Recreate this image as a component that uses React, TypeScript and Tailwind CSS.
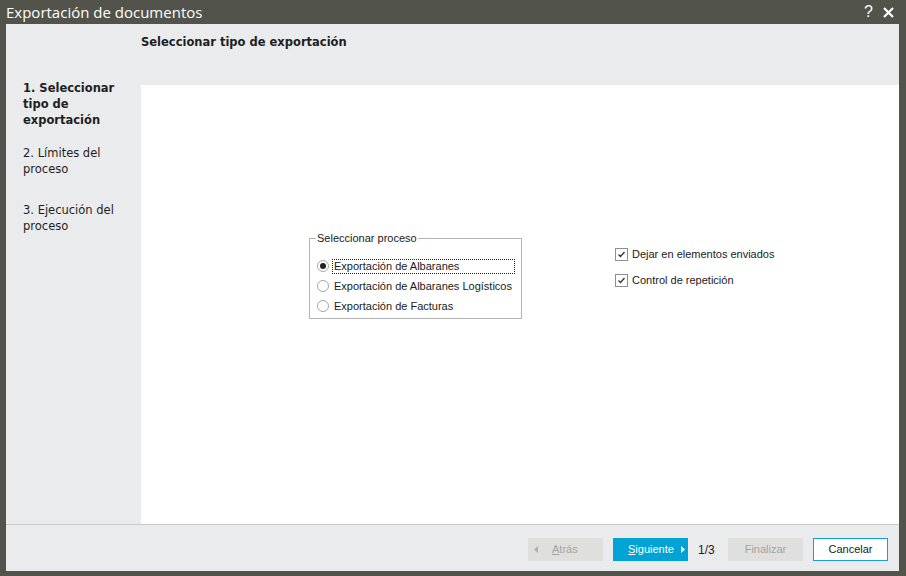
import { useState } from "react";

const steps = [
  { label: "1. Seleccionar tipo de exportación", active: true, gap: "mb-[17px]" },
  { label: "2. Límites del proceso", active: false, gap: "mb-[25px]" },
  { label: "3. Ejecución del proceso", active: false, gap: "" },
];

const procesos = [
  "Exportación de Albaranes",
  "Exportación de Albaranes Logísticos",
  "Exportación de Facturas",
];

const Radio = ({ checked }: { checked: boolean }) => (
  <span className="w-[12px] h-[12px] rounded-full border border-[#a8a8a8] bg-white flex items-center justify-center shrink-0">
    {checked && <span className="w-[6px] h-[6px] rounded-full bg-[#222]" />}
  </span>
);

const Check = () => (
  <span className="w-[13px] h-[13px] border border-[#8f8f8f] bg-white flex items-center justify-center shrink-0">
    <svg width="9" height="9" viewBox="0 0 9 9">
      <path d="M1.5 4.5 L3.5 6.5 L7.5 2" fill="none" stroke="#333" strokeWidth="1.3" />
    </svg>
  </span>
);

const App = () => {
  const [selected, setSelected] = useState(0);

  return (
    <div className="w-[906px] h-[576px] bg-[#52534b] flex flex-col font-['DejaVu_Sans',sans-serif]">
      <div className="h-[24px] flex items-center justify-between pl-[6px] pr-[12px] text-white">
        <span className="font-['Open_Sans',sans-serif] text-[15px] leading-none">Exportación de documentos</span>
        <div className="flex items-center gap-[10px]">
          <span className="font-['Liberation_Sans',sans-serif] text-[16px] leading-none">?</span>
          <svg width="11" height="11" viewBox="0 0 11 11">
            <path d="M1 1 L10 10 M10 1 L1 10" stroke="#fff" strokeWidth="2.2" />
          </svg>
        </div>
      </div>

      <div className="flex-1 ml-[6px] mr-[7px] mb-[5px] bg-[#eaebed] flex flex-col">
        <div className="flex flex-1">
          <aside className="w-[135px] pt-[56px] pl-[17px] pr-[4px] flex flex-col text-[11.5px] leading-[16px] text-[#1e1e1e]">
            {steps.map((s) => (
              <div key={s.label} className={`${s.gap} ${s.active ? "font-bold" : ""}`}>
                {s.label}
              </div>
            ))}
          </aside>

          <div className="flex-1 flex flex-col">
            <div className="h-[61px] pt-[10px] text-[11.5px] font-bold text-[#1e1e1e]">
              Seleccionar tipo de exportación
            </div>
            <div className="flex-1 bg-white pt-[146px] pl-[168px] flex items-start gap-[93px] font-['Liberation_Sans',sans-serif] text-[11px] text-[#1a1a1a] whitespace-nowrap">
              <fieldset className="w-[213px] h-[88px] border border-[#b4b4b4] pl-[6px] pr-[6px]">
                <legend className="px-[1px] leading-[14px]">Seleccionar proceso</legend>
                <div className="flex flex-col pt-[11px] pl-[1px]">
                  {procesos.map((p, i) => (
                    <label
                      key={p}
                      onClick={() => setSelected(i)}
                      className="h-[20px] flex items-center gap-[3px] cursor-default"
                    >
                      <Radio checked={selected === i} />
                      <span
                        className={
                          selected === i
                            ? "flex-1 border border-dotted border-[#222] leading-[13px] px-[1px]"
                            : "border border-transparent leading-[13px] px-[1px]"
                        }
                      >
                        {p}
                      </span>
                    </label>
                  ))}
                </div>
              </fieldset>

              <div className="flex flex-col gap-[13px] pt-[17px]">
                <label className="flex items-center gap-[4px] leading-[13px]">
                  <Check />
                  <span>Dejar en elementos enviados</span>
                </label>
                <label className="flex items-center gap-[4px] leading-[13px]">
                  <Check />
                  <span>Control de repetición</span>
                </label>
              </div>
            </div>
          </div>
        </div>

        <div className="h-[47px] border-t border-[#c9c9c9] flex items-center justify-end pr-[11px] pt-[3px] font-['Liberation_Sans',sans-serif] text-[11px] whitespace-nowrap">
          <button className="w-[75px] h-[23px] bg-[#dfe0de] text-[#a3a3a3] flex items-center pl-[6px]">
            <svg width="4" height="7" viewBox="0 0 4 7" className="mr-[14px]">
              <path d="M4 0 L0 3.5 L4 7 Z" fill="#b0b0b0" />
            </svg>
            <span>
              <span className="underline">A</span>trás
            </span>
          </button>
          <button className="ml-[10px] w-[75px] h-[23px] bg-[#00a3d3] text-white flex items-center pl-[15px] gap-[7px]">
            <span>
              <span className="underline">S</span>iguiente
            </span>
            <svg width="4" height="7" viewBox="0 0 4 7">
              <path d="M0 0 L4 3.5 L0 7 Z" fill="#fff" />
            </svg>
          </button>
          <span className="ml-[10px] w-[30px] text-[12px] text-[#1a1a1a]">1/3</span>
          <button className="w-[75px] h-[23px] bg-[#dfe0de] text-[#a3a3a3]">Finalizar</button>
          <button className="ml-[10px] w-[75px] h-[23px] bg-white border border-[#1b9bd7] text-[#1a1a1a]">
            Cancelar
          </button>
        </div>
      </div>
    </div>
  );
};

export default App;
